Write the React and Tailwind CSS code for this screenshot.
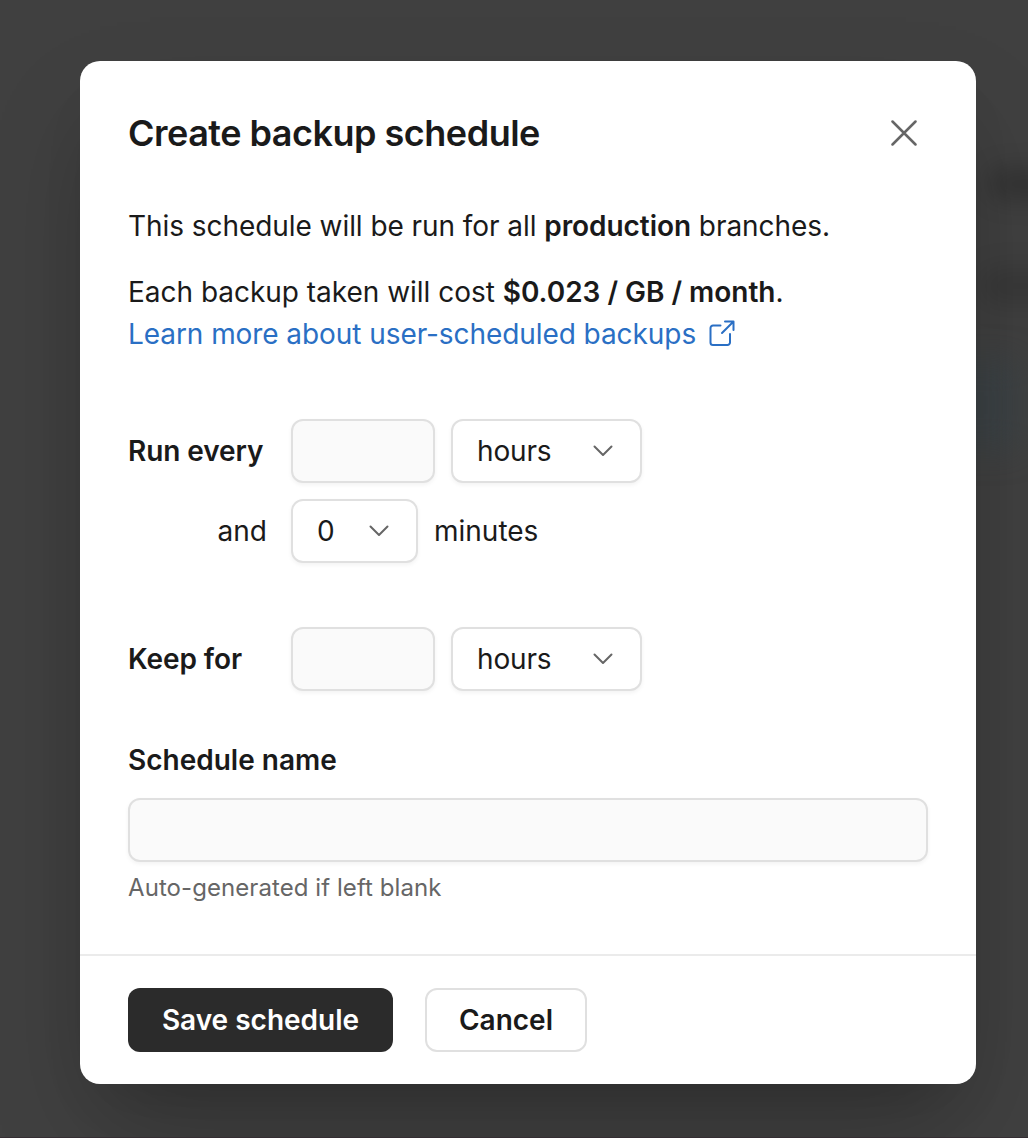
const Select = ({ value, className }) => (
  <div className={`flex h-16 items-center justify-between rounded-[12px] border-2 border-[#e0e0e0] bg-white pl-6 pr-[27px] shadow-[0_2px_4px_rgba(0,0,0,0.05)] ${className}`}>
    <span>{value}</span>
    <svg width="20" height="12" viewBox="0 0 20 12" fill="none" stroke="#666" strokeWidth="2" strokeLinecap="round" strokeLinejoin="round"><path d="M1.500 1.500 10 10l8.500-8.500" /></svg>
  </div>
);

const Input = ({ className }) => (
  <input className={`block h-16 rounded-[12px] border-2 border-[#e0e0e0] bg-[#fafafa] shadow-[0_2px_4px_rgba(0,0,0,0.05)] outline-none ${className}`} />
);

export default function App() {
  return (
    <div className="relative h-[1138px] w-[1028px] overflow-hidden border-b border-[#352e33] bg-[#404040] px-20 pt-[61px] font-['Inter',sans-serif] text-[28px] leading-[42px] text-[#1a1a1a]">
      <div className="absolute left-[988px] top-[168px] h-8 w-20 rounded-full bg-black/20 blur-[12px]" />
      <div className="absolute left-[980px] top-[270px] h-8 w-20 rounded-full bg-black/15 blur-[14px]" />
      <div className="absolute left-[940px] top-[360px] h-[90px] w-20 bg-[#34434c]/40 blur-[16px]" />
      <div className="relative flex h-[1023px] w-[896px] flex-col rounded-[20px] bg-white shadow-[0_50px_100px_-20px_rgba(0,0,0,0.25),0_30px_60px_-30px_rgba(0,0,0,0.15)]">
        <div className="flex h-[893px] flex-col px-12">
          <header className="mt-[48px] flex h-12 items-center justify-between">
            <h1 className="text-[36px] font-semibold tracking-[-0.5px]">Create backup schedule</h1>
            <svg className="mr-[11px]" width="26" height="26" viewBox="0 0 26 26" fill="none" stroke="#666" strokeWidth="2.500" strokeLinecap="round"><path d="M1.500 1.500l23 23M24.500 1.500l-23 23" /></svg>
          </header>
          <p className="mt-[48px] whitespace-nowrap tracking-[-0.06px]">This schedule will be run for all <b className="font-semibold">production</b> branches.</p>
          <p className="mt-6 whitespace-nowrap tracking-[-0.02px]">Each backup taken will cost <b className="font-semibold">$0.023 / GB / month</b>.</p>
          <a className="flex items-center gap-[13px] whitespace-nowrap tracking-[-0.07px] text-[#2a6fc4]">
            <span>Learn more about user-scheduled backups</span>
            <svg className="-mt-[3px]" width="26" height="26" viewBox="0 0 26 26" fill="none" stroke="currentColor" strokeWidth="2" strokeLinecap="round" strokeLinejoin="round"><path d="M11.500 5.500H4A2.500 2.500 0 0 0 1.500 8v14.500A2.500 2.500 0 0 0 4 25h14.500A2.500 2.500 0 0 0 21 22.500V14M16 1.500h8.500V10M24.500 1.500 13 13" /></svg>
          </a>
          <div className="mt-[64px] flex items-center"><b className="w-[163px] font-semibold tracking-[-0.08px]">Run every</b><Input className="w-36" /><Select value="hours" className="ml-4 w-[191px] tracking-[-0.15px]" /></div>
          <div className="mt-4 flex items-center"><span className="w-[163px] pr-6 text-right">and</span><Select value="0" className="w-[127px]" /><span className="ml-4">minutes</span></div>
          <div className="mt-16 flex items-center"><b className="w-[163px] font-semibold tracking-[-0.08px]">Keep for</b><Input className="w-36" /><Select value="hours" className="ml-4 w-[191px] tracking-[-0.15px]" /></div>
          <label className="mt-[48px] font-semibold">Schedule name</label>
          <Input className="mt-[17px] w-[800px]" />
          <p className="mt-[8px] text-[24px] leading-9 tracking-[0.07px] text-[#666]">Auto-generated if left blank</p>
        </div>
        <footer className="flex flex-1 items-start gap-8 border-t-2 border-[#ebebeb] px-12 pt-8">
          <button className="h-16 w-[265px] rounded-[12px] bg-[#2b2b2b] font-semibold text-white">Save schedule</button>
          <button className="h-16 w-[162px] rounded-[12px] border-2 border-[#e0e0e0] font-semibold">Cancel</button>
        </footer>
      </div>
    </div>
  );
}
